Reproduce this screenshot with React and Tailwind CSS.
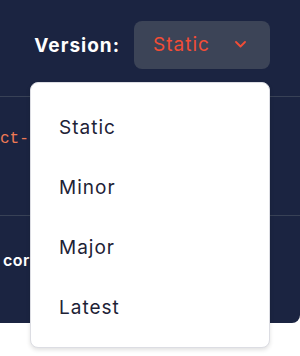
import React from 'react'

const versions = ['Static', 'Minor', 'Major', 'Latest']

const App = () => {
  return (
    <div className="relative w-[300px] h-[356px] bg-white overflow-hidden font-['Inter',sans-serif]">
      {/* Dark page section */}
      <div className="h-[323px] bg-[#1b2441] rounded-br-lg overflow-hidden">
        {/* Header with version picker */}
        <div className="h-[97px] flex justify-end items-center gap-[14px] pr-[30px] pb-[7px] border-b border-[#384156]">
          <span className="text-white font-bold text-[19px] tracking-[1px] pt-[3px]">Version:</span>
          <button className="w-[136px] h-[48px] rounded-lg bg-[#3c4457] flex items-center justify-between pl-[19px] pr-[24px]">
            <span className="text-[#f24d36] text-[19px] tracking-[1px] pt-[2px]">Static</span>
            <svg width="11" height="7" viewBox="0 0 11 7" fill="none">
              <path d="M1 1l4.5 4.5L10 1" stroke="#f24d36" strokeWidth="1.8" strokeLinecap="round" strokeLinejoin="round" />
            </svg>
          </button>
        </div>

        {/* Code line */}
        <div className="h-[119px] border-b border-[#384156] pt-[30px] whitespace-nowrap">
          <code className="block font-['Liberation_Mono',monospace] text-[16px] text-[#f07a55]">ct-</code>
        </div>

        {/* Description */}
        <div className="pt-[32px] pl-[3px] whitespace-nowrap text-white font-semibold text-[16px] tracking-[0.5px]">
          cor
        </div>
      </div>

      {/* Dropdown menu */}
      <div className="absolute left-[30px] top-[82px] w-[240px] h-[266px] bg-white rounded-lg border border-[#dcdde3] shadow-[0_2px_4px_rgba(0,0,0,0.12)] pt-[15px]">
        {versions.map((v) => (
          <div key={v} className="h-[60px] flex items-center pl-[28px] text-[19px] text-[#1d2236] tracking-[1px]">
            {v}
          </div>
        ))}
      </div>
    </div>
  )
}

export default App
